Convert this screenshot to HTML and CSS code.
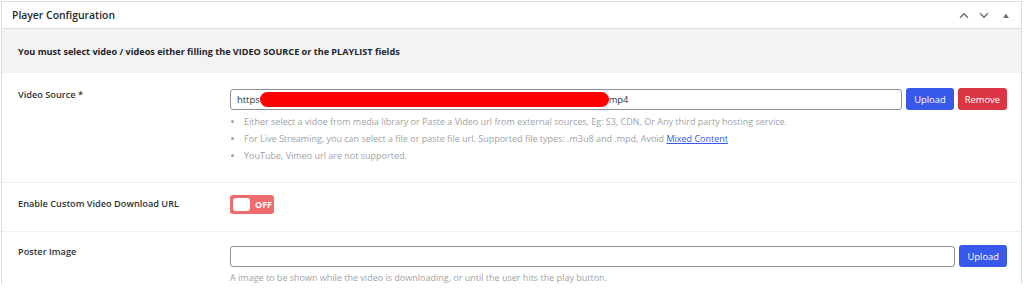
FILE: index.html
```html
<!DOCTYPE html>
<html lang="en">
<head>
<meta charset="utf-8">
<title>Player Configuration</title>
<link rel="stylesheet" href="styles.css">
</head>
<body>
<div class="panel">
  <div class="panel-head">
    <h2 class="panel-title">Player Configuration</h2>
    <div class="head-actions">
      <svg class="chev" width="10" height="7" viewBox="0 0 10 7"><path d="M1 5.8 L5 1.8 L9 5.8" fill="none" stroke="#6e7378" stroke-width="1.5"/></svg>
      <svg class="chev" width="10" height="7" viewBox="0 0 10 7"><path d="M1 1.2 L5 5.2 L9 1.2" fill="none" stroke="#6e7378" stroke-width="1.5"/></svg>
      <svg class="tri" width="6" height="5" viewBox="0 0 6 5"><path d="M0 5 L3 0.5 L6 5 Z" fill="#6e7378"/></svg>
    </div>
  </div>
  <div class="notice">You must select video / videos either filling the VIDEO SOURCE or the PLAYLIST fields</div>

  <div class="row row-source">
    <div class="label">Video Source *</div>
    <div class="field">
      <div class="input-line">
        <div class="input">https<span class="redact"></span>mp4</div>
        <button class="btn btn-blue">Upload</button>
        <button class="btn btn-red">Remove</button>
      </div>
      <ul class="help-list">
        <li>Either select a vidoe from media library or Paste a Video url from external sources, Eg: S3, CDN, Or Any third party hosting service.</li>
        <li>For Live Streaming, you can select a file or paste file url. Supported file types: .m3u8 and .mpd, Avoid <a href="#">Mixed Content</a></li>
        <li>YouTube, Vimeo url are not supported.</li>
      </ul>
    </div>
  </div>

  <div class="row row-toggle">
    <div class="label">Enable Custom Video Download URL</div>
    <div class="field">
      <div class="toggle"><span class="knob"></span><span class="toggle-text">OFF</span></div>
    </div>
  </div>

  <div class="row row-poster">
    <div class="label">Poster Image</div>
    <div class="field">
      <div class="input-line">
        <div class="input"></div>
        <button class="btn btn-blue">Upload</button>
      </div>
      <p class="help">A image to be shown while the video is downloading, or until the user hits the play button.</p>
    </div>
  </div>
</div>
</body>
</html>
```

FILE: styles.css
```css
* { box-sizing: border-box; }
html, body { margin: 0; padding: 0; background: #fff; }
body {
  font-family: "Open Sans", "Noto Sans", sans-serif;
  color: #2c3338;
  height: 299px;
  overflow: hidden;
}
.panel {
  margin: 1px 0 0 1px;
  width: 1021px;
  border: 1px solid #dcdcde;
  border-bottom: none;
  background: #fff;
}
.panel-head {
  height: 27px;
  display: flex;
  align-items: center;
  justify-content: space-between;
  padding: 0 12px 0 10px;
  border-bottom: 1px solid #dcdcde;
}
.panel-title {
  margin: 0;
  font-size: 10.4px;
  font-weight: 600;
  color: #23282d;
}
.head-actions {
  display: flex;
  align-items: center;
  gap: 10px;
}
.head-actions .chev { display: block; }
.head-actions .tri { display: block; margin-left: 4px; }
.notice {
  height: 44px;
  background: #f3f3f3;
  display: flex;
  align-items: center;
  padding-left: 16px;
  font-size: 9.1px;
  font-weight: 700;
  color: #1d2327;
}
.row {
  display: grid;
  grid-template-columns: 212px 1fr;
  padding-left: 16px;
  padding-right: 14px;
  border-bottom: 1px solid #f0f0f1;
}
.row-source { padding-top: 15px; height: 110px; }
.row-toggle { padding-top: 14px; height: 49px; }
.row-poster { padding-top: 13px; border-bottom: none; }
.label {
  font-size: 9.2px;
  font-weight: 600;
  color: #2c3338;
  line-height: 14px;
}
.field { min-width: 0; }
.input-line {
  display: flex;
  align-items: center;
  gap: 4px;
}
.input {
  flex: 1;
  height: 21px;
  border: 1px solid #8c8f94;
  border-radius: 3px;
  font-size: 9.4px;
  line-height: 19px;
  padding-left: 6px;
  color: #2c3338;
  display: flex;
  align-items: center;
}
.redact {
  display: inline-block;
  width: 349px;
  height: 15px;
  background: #ff0000;
  border-radius: 8px;
}
.btn {
  height: 22px;
  border: none;
  border-radius: 3px;
  color: #fff;
  font-family: inherit;
  font-size: 9.4px;
  padding: 0 8px;
  cursor: pointer;
}
.btn-blue { background: #3858e9; }
.btn-red { background: #dc3545; padding: 0 7px; }
.help-list {
  list-style: disc;
  margin: 3px 0 0 0;
  padding-left: 14px;
  font-size: 9px;
  line-height: 17px;
  color: #a0a3a7;
}
.help-list li::marker { font-size: 8px; }
.help-list a { color: #3858e9; text-decoration: underline; }
.toggle {
  width: 44px;
  height: 19px;
  margin-top: -2px;
  border-radius: 3px;
  background: #ef6c6c;
  display: flex;
  align-items: center;
  padding-left: 3px;
  gap: 5px;
}
.knob {
  width: 17px;
  height: 13px;
  background: #fff;
  border-radius: 3px;
}
.toggle-text {
  font-size: 9px;
  font-weight: 700;
  color: #fff;
}
.help {
  margin: 4px 0 0 0;
  font-size: 9px;
  color: #a0a3a7;
}
```
